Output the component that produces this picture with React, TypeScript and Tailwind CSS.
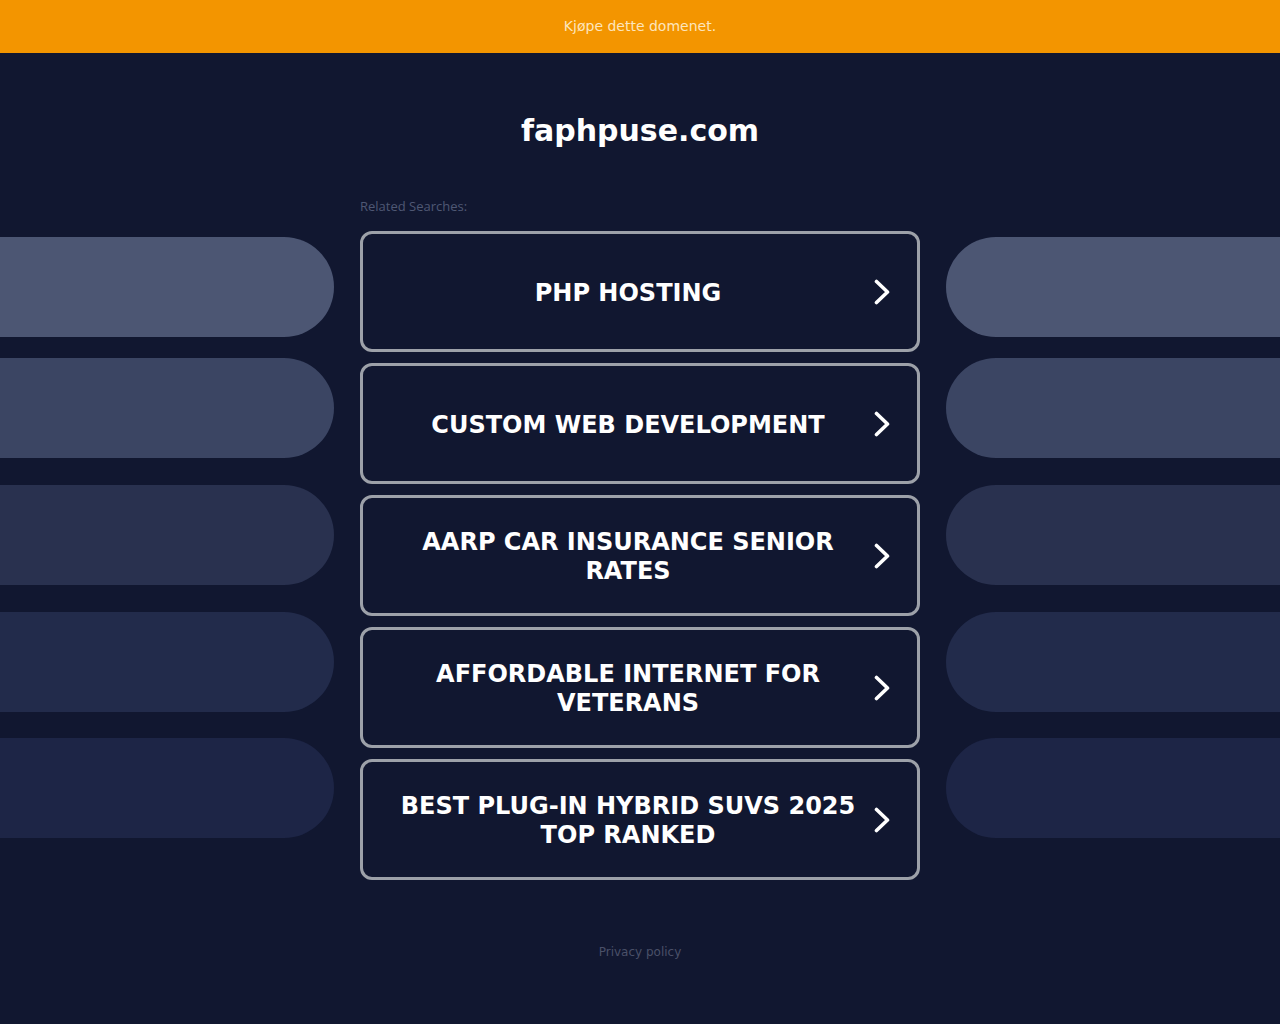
const searches = [
  "PHP Hosting",
  "Custom Web Development",
  "AARP Car Insurance Senior Rates",
  "Affordable Internet for Veterans",
  "Best Plug-in Hybrid SUVs 2025 Top Ranked",
];

// decorative side pills, lighter on top
const pills = [
  { color: "bg-[#4c5673]", mt: "mt-0" },
  { color: "bg-[#3b4563]", mt: "mt-[21px]" },
  { color: "bg-[#29314f]", mt: "mt-[27px]" },
  { color: "bg-[#222b4b]", mt: "mt-[27px]" },
  { color: "bg-[#1d2546]", mt: "mt-[26px]" },
];

const Chevron = () => (
  <svg width="16" height="26" viewBox="0 0 16 26" fill="none" className="shrink-0">
    <path d="M2.5 2.5 L13.5 13 L2.5 23.5" stroke="white" strokeWidth="3.6" strokeLinecap="round" strokeLinejoin="round" />
  </svg>
);

const PillColumn = ({ side }: { side: "left" | "right" }) => (
  <div className="w-[334px] mt-[88px] flex flex-col">
    {pills.map((p, i) => (
      <div
        key={i}
        className={`${p.mt} ${p.color} h-[100px] ${side === "left" ? "rounded-r-[50px]" : "rounded-l-[50px]"}`}
      />
    ))}
  </div>
);

const App = () => {
  return (
    <div className="min-h-[1024px] bg-[#111730] font-['DejaVu_Sans',sans-serif]">
      <div className="h-[53px] bg-[#f39500] flex items-center justify-center">
        <span className="text-[14px] text-[#fde5bd]">Kjøpe dette domenet.</span>
      </div>

      <h1 className="pt-[60px] text-center text-[30px] leading-[36px] font-bold text-white">faphpuse.com</h1>

      <div className="flex justify-between">
        <PillColumn side="left" />

        <div className="w-[560px] mt-[49px]">
          <p className="text-[13px] leading-[16px] text-[#4f5874] font-['Open_Sans',sans-serif] mb-[17px]">Related Searches:</p>
          <div className="flex flex-col gap-[11px]">
            {searches.map((s) => (
              <a
                key={s}
                href="#"
                className="h-[121px] border-[3px] border-[#9da1a9] rounded-[12px] flex items-center pl-[19px] pr-[27px]"
              >
                <span className="flex-1 mt-[3px] text-center text-white font-bold uppercase text-[24px] leading-[29px]">
                  {s}
                </span>
                <Chevron />
              </a>
            ))}
          </div>
        </div>

        <PillColumn side="right" />
      </div>

      <p className="mt-[64px] text-center text-[12px] leading-[16px] text-[#4a5068]">Privacy policy</p>
    </div>
  );
};

export default App;
